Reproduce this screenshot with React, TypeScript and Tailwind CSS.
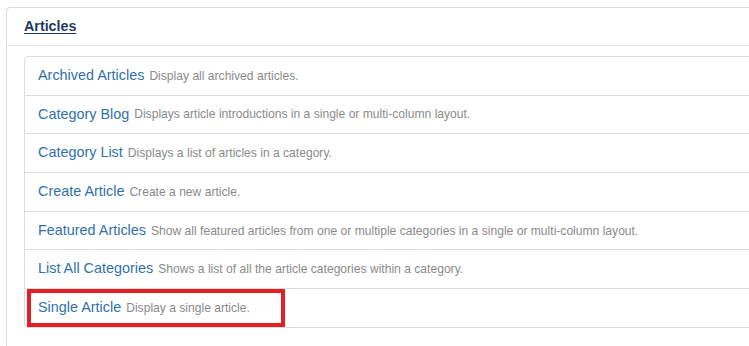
const items = [
  { title: "Archived Articles", desc: "Display all archived articles." },
  { title: "Category Blog", desc: "Displays article introductions in a single or multi-column layout." },
  { title: "Category List", desc: "Displays a list of articles in a category." },
  { title: "Create Article", desc: "Create a new article." },
  { title: "Featured Articles", desc: "Show all featured articles from one or multiple categories in a single or multi-column layout." },
  { title: "List All Categories", desc: "Shows a list of all the article categories within a category." },
  { title: "Single Article", desc: "Display a single article.", highlight: true },
];

export default function App() {
  return (
    <div className="h-[346px] w-[749px] overflow-hidden bg-white font-['Liberation_Sans',Arial,sans-serif]">
      <div className="ml-[6px] mt-[7px] w-[780px] rounded-[4px] border border-[#dddddd] bg-white">
        <div className="flex h-[38px] items-center border-b border-[#e5e5e5] px-[17px] pt-[1px]">
          <a href="#" className="text-[14.3px] font-bold text-[#1e3a5c] underline underline-offset-2">
            Articles
          </a>
        </div>
        <div className="pl-[17px] pt-[10px] pb-[20px]">
          <ul className="rounded-[4px] border border-[#dddddd]">
            {items.map((item, i) => (
              <li
                key={item.title}
                className={`relative flex items-center pl-[13px] ${i > 0 ? "h-[38.7px] border-t border-[#dddddd]" : "h-[37.7px]"}`}
              >
                <span className="text-[14.4px] text-[#3071a9]">{item.title}</span>
                <span className="ml-[5px] text-[12.1px] text-[#8a8a8a]">{item.desc}</span>
                {item.highlight && (
                  <div className="absolute left-[2px] top-0 bottom-0 w-[258px] border-4 border-[#e41e26]" />
                )}
              </li>
            ))}
          </ul>
        </div>
      </div>
    </div>
  );
}
